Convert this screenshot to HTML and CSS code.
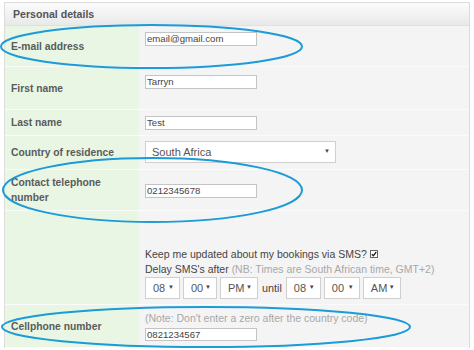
FILE: index.html
```html
<!DOCTYPE html>
<html>
<head>
<meta charset="utf-8">
<link rel="stylesheet" href="styles.css">
</head>
<body>
<div class="panel">
  <div class="panel-head">Personal details</div>
  <div class="row r1">
    <div class="label">E-mail address</div>
    <div class="field"><span class="input">email@gmail.com</span></div>
  </div>
  <div class="row r2">
    <div class="label">First name</div>
    <div class="field"><span class="input">Tarryn</span></div>
  </div>
  <div class="row r3">
    <div class="label">Last name</div>
    <div class="field"><span class="input">Test</span></div>
  </div>
  <div class="row r4">
    <div class="label">Country of residence</div>
    <div class="field"><span class="select wide">South Africa<span class="arrow">▼</span></span></div>
  </div>
  <div class="row r5">
    <div class="label">Contact telephone<br>number</div>
    <div class="field"><span class="input">0212345678</span></div>
  </div>
  <div class="row r6">
    <div class="label"></div>
    <div class="field">
      <div class="line">Keep me updated about my bookings via SMS? <span class="check"><svg width="8" height="8" viewBox="0 0 8 8"><rect x="0.5" y="0.5" width="7" height="7" fill="#fff" stroke="#666"/><path d="M1.8 4.2 L3.3 5.7 L6.3 2" fill="none" stroke="#222" stroke-width="1.3"/></svg></span></div>
      <div class="line">Delay SMS's after <span class="muted">(NB: Times are South African time, GMT+2)</span></div>
      <div class="times">
        <span class="select t w35">08<span class="arrow">▼</span></span>
        <span class="select t w34">00<span class="arrow">▼</span></span>
        <span class="select t w38">PM<span class="arrow">▼</span></span>
        <span class="until">until</span>
        <span class="select t w35">08<span class="arrow">▼</span></span>
        <span class="select t w36">00<span class="arrow">▼</span></span>
        <span class="select t w38">AM<span class="arrow">▼</span></span>
      </div>
    </div>
  </div>
  <div class="row r7">
    <div class="label">Cellphone number</div>
    <div class="field">
      <div class="line muted">(Note: Don't enter a zero after the country code)</div>
      <span class="input cell">0821234567</span>
    </div>
  </div>
</div>
<svg class="marks" width="474" height="350" viewBox="0 0 474 350">
  <ellipse cx="151.5" cy="46.5" rx="150.5" ry="21.5" fill="none" stroke="#1b9bd7" stroke-width="2"/>
  <ellipse cx="152.5" cy="190" rx="149.5" ry="32" fill="none" stroke="#1b9bd7" stroke-width="2"/>
  <ellipse cx="206" cy="327" rx="204" ry="20" fill="none" stroke="#1b9bd7" stroke-width="2"/>
</svg>
</body>
</html>
```
FILE: styles.css
```css
html, body {
  margin: 0;
  padding: 0;
  background: #fff;
  width: 474px;
  height: 350px;
  overflow: hidden;
  font-family: "Liberation Sans", Arial, sans-serif;
}
.panel {
  margin: 2px 0 0 4px;
  width: 466px;
  border: 1px solid #dcdcdc;
  border-bottom: none;
  box-sizing: border-box;
  background: #f4f4f4;
}
.panel-head {
  height: 23px;
  box-sizing: border-box;
  padding-left: 8px;
  display: flex;
  align-items: center;
  font-weight: bold;
  font-size: 10.6px;
  color: #555;
  background: linear-gradient(#fbfbfb, #e9e9e9);
  border-bottom: 1px solid #e0e0e0;
}
.row {
  display: grid;
  grid-template-columns: 134px 1fr;
  box-sizing: border-box;
  border-bottom: 1px solid #fbfbfb;
}
.label {
  background: #e9f6e3;
  display: flex;
  align-items: center;
  padding-left: 6px;
  font-weight: bold;
  font-size: 10.3px;
  line-height: 15px;
  color: #5b5b5b;
}
.field {
  padding-left: 6px;
  box-sizing: border-box;
}
.r1 { height: 41px; }
.r1 .field { padding-top: 6px; }
.r2 { height: 43px; }
.r2 .field { padding-top: 8px; }
.r3 { height: 26px; }
.r3 .field { padding-top: 6px; }
.r4 { height: 34px; }
.r4 .field { padding-top: 5px; }
.r5 { height: 41px; }
.r5 .field { padding-top: 14px; }
.r6 { height: 94px; }
.r6 .field { padding-top: 36px; }
.r7 { height: 43px; }
.r7 .field { padding-top: 6px; }
.input {
  display: block;
  width: 112px;
  height: 14px;
  box-sizing: border-box;
  background: #fff;
  border: 1px solid #c4c4c4;
  font-size: 9.6px;
  line-height: 12px;
  padding-left: 1px;
  color: #444;
}
.input.cell { margin-top: 2px; height: 13px; line-height: 11px; }
.select {
  position: relative;
  display: inline-flex;
  align-items: center;
  height: 22px;
  box-sizing: border-box;
  background: #fff;
  border: 1px solid #cfcfcf;
  color: #555;
  font-size: 11px;
}
.select.wide {
  width: 191px;
  padding-left: 6px;
}
.arrow {
  position: absolute;
  right: 5px;
  top: 6px;
  font-size: 6px;
  color: #444;
}
.select.t {
  flex: none;
  padding-left: 7px;
}
.w34 { width: 34px; }
.w35 { width: 35px; }
.w36 { width: 36px; }
.w38 { width: 38px; }
.line {
  font-size: 10.5px;
  line-height: 15px;
  color: #444;
  white-space: nowrap;
}
.muted { color: #a8a8a8; }
.check { display: inline-block; vertical-align: 0px; margin-left: 0; }
.check svg { display: block; }
.times {
  display: flex;
  align-items: center;
  gap: 3px;
  height: 22px;
}
.until {
  font-size: 10.8px;
  color: #444;
  margin: 0 1px;
}
.marks {
  position: absolute;
  left: 0;
  top: 0;
  pointer-events: none;
}
```
